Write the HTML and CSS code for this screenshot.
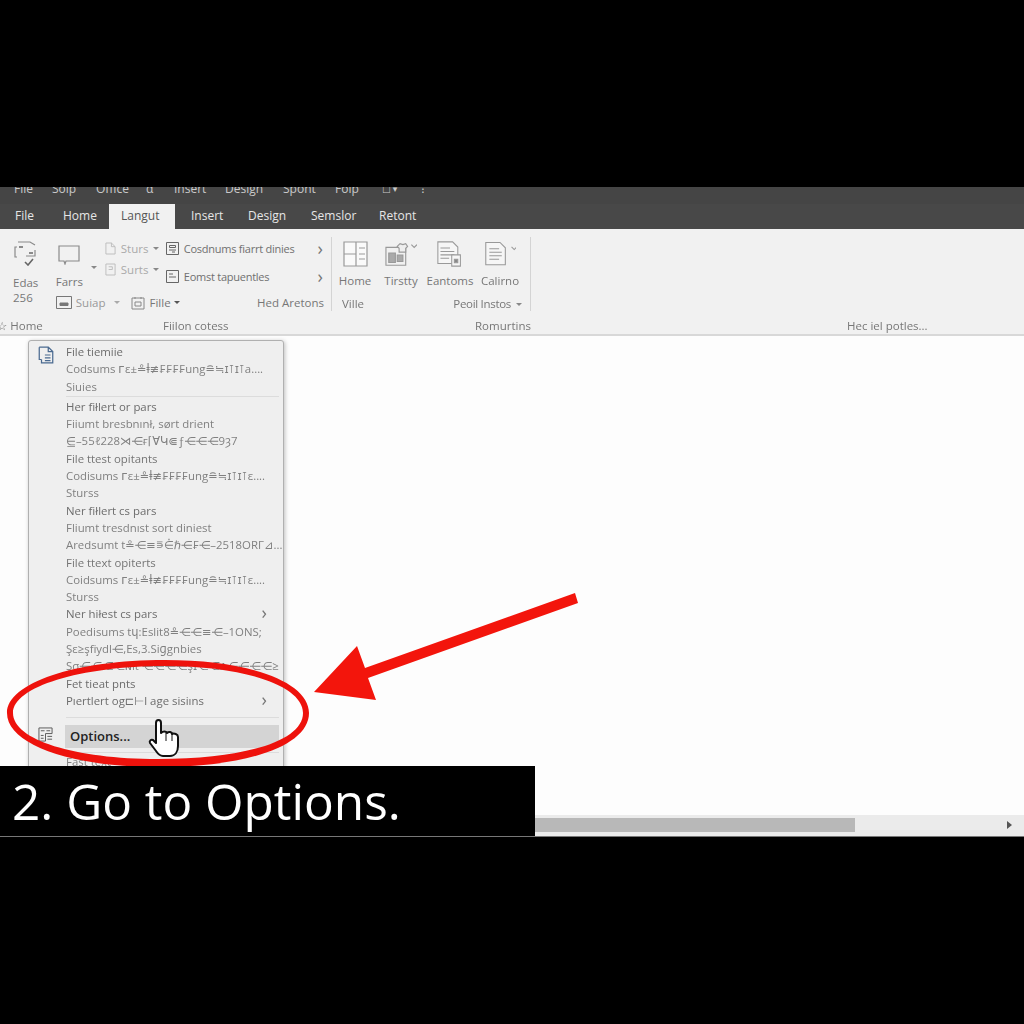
FILE: index.html
```html
<!DOCTYPE html>
<html>
<head>
	<link rel="stylesheet" href="styles.css">
</head>
<body>
	<div class="window">
		<div class="titlebar">
			<span class="t1">File</span><span class="t2">Soip</span><span class="t3">Office</span><span class="t4">α</span><span class="t5">Insert</span><span class="t6">Design</span><span class="t7">Spont</span><span class="t8">Foip</span><span class="t9">□ ▾</span><span class="t10">⁝</span>
		</div>
		<div class="tabs">
			<span class="tab w48">File</span>
			<span class="tab w46">Home</span>
			<span class="tab active">Langut</span>
			<span class="tab w57">Insert</span>
			<span class="tab w63">Design</span>
			<span class="tab w68">Semslor</span>
			<span class="tab">Retont</span>
		</div>
		<div class="ribbon">
			<div class="groups">
				<div class="group g1">
					<div class="edas">
						<svg class="ic24" viewBox="0 0 24 26" fill="none" stroke="#8a8a8a" stroke-width="1.2"><path d="M4 7H2V17H4M5 2H17L22 5M22 10V16H13"/><path d="M6 7h4M16 13h4" stroke-width="2"/><path d="M12 22l3 3 5-6" stroke="#666" stroke-width="1.6"/></svg>
						<span class="lbl first">Edas</span>
						<span class="lbl">256</span>
					</div>
					<div class="mid">
						<div class="mid-top">
							<div class="farrs">
								<svg class="ic22" viewBox="0 0 22 20" fill="none" stroke="#8a8a8a" stroke-width="1.2"><path d="M1 1h20v15H8l-1 3-1-3H1z"/></svg>
								<span class="lbl">Farrs</span>
							</div>
							<div class="caret-col"><span class="caret plain"></span></div>
							<div class="small-col">
								<div class="small-row">
									<svg class="ic12" viewBox="0 0 12 14" fill="none" stroke="#bbb"><path d="M1 1h6l4 4v8H1zM7 1v4h4"/></svg>
									<span class="lbl pale">Sturs</span><span class="caret"></span>
								</div>
								<div class="small-row">
									<svg class="ic12" viewBox="0 0 12 14" fill="none" stroke="#bbb"><path d="M1 1h10v12H1zM4 4h4v3H4"/></svg>
									<span class="lbl pale">Surts</span><span class="caret"></span>
								</div>
							</div>
						</div>
						<div class="mid-bottom">
							<svg class="ic16" viewBox="0 0 16 13" fill="none" stroke="#777"><path d="M.5.5h15v12H.5z"/><path d="M4 7h8v2.500H4z" fill="#777"/></svg>
							<span class="lbl pale2">Suiap</span><span class="caret swap"></span>
							<svg class="ic14" viewBox="0 0 14 14" fill="none" stroke="#888"><path d="M1 2h12v11H1zM4 1v2M10 1v2M4 6h6v4H4z"/></svg>
							<span class="lbl">Fille</span><span class="caret dark"></span>
						</div>
					</div>
					<div class="list">
						<div class="list-row">
							<svg class="ic13" viewBox="0 0 13 13" fill="none" stroke="#666"><path d="M.5.5h12v12H.5zM3.500 3.500h6v2h-6zM3 8h7M6 10h3"/></svg>
							<span class="lbl wide">Cosdnums fiarrt dinies</span><span class="chev">›</span>
						</div>
						<div class="list-row">
							<svg class="ic13" viewBox="0 0 13 13" fill="none" stroke="#666"><path d="M.5.5h12v12H.5zM3 4h4M3 7h7"/></svg>
							<span class="lbl wide">Eomst tapuentles</span><span class="chev">›</span>
						</div>
						<div class="list-foot lbl">Hed Aretons</div>
					</div>
				</div>
				<div class="group g2">
					<div class="big-row">
						<div class="big w46b">
							<svg class="ic26" viewBox="0 0 25 26" fill="#fafafa" stroke="#999" stroke-width="1.2"><path d="M1 1h23v24H1z"/><path d="M1 13h12M13 1v24M16 7h6M16 13h6M16 18h6"/></svg>
							<span class="lbl">Home</span>
						</div>
						<div class="big w46b">
							<svg class="ic26 wide-ic" viewBox="0 0 34 26" fill="none" stroke="#999" stroke-width="1.2"><path d="M1 6h21v19H1z"/><path d="M4 12h7v10H4zM13 14h6v7h-6z" fill="#aaa"/><path d="M13 5l3-3 3 1 3-1 2 3-2 2v4h-7V7z" fill="#eee"/><path d="M28 3l3 3 3-3"/></svg>
							<span class="lbl">Tirstty</span>
						</div>
						<div class="big w52b">
							<svg class="ic26 wide-ic" viewBox="0 0 30 30" fill="#f6f6f6" stroke="#999" stroke-width="1.2"><path d="M1 1h17l6 6v19H1z"/><path d="M4 8h11M4 12h16M4 16h16M4 20h10" /><path d="M17 16h10v13H17z"/><path d="M20 21h4v4h-4z" fill="#888"/></svg>
							<span class="lbl">Eantoms</span>
						</div>
						<div class="big w48b">
							<svg class="ic26 wide-ic" viewBox="0 0 36 28" fill="#f6f6f6" stroke="#999" stroke-width="1.2"><path d="M2 1h16l6 6v19H2z"/><path d="M6 8h11M6 12h14M6 16h14M6 20h11"/><path d="M31 6l3 3 3-3" fill="none"/></svg>
							<span class="lbl">Calirno</span>
						</div>
					</div>
					<div class="g2-foot">
						<span class="lbl">Ville</span>
						<span class="lbl squeeze">Peoil Instos<span class="caret"></span></span>
					</div>
				</div>
			</div>
			<div class="footer">
				<span class="lbl f1">☆ Home</span>
				<span class="lbl f2">Fiilon cotess</span>
				<span class="lbl f3">Romurtins</span>
				<span class="lbl">Hec iel potles...</span>
			</div>
		</div>
		<div class="content"></div>
		<div class="scrollbar">
			<div class="thumb"></div>
			<span class="arrow"></span>
		</div>
	</div>

	<div class="menu">
		<svg class="doc-ic" viewBox="0 0 14 16" fill="none" stroke="#4a6a90" stroke-width="1.1"><path d="M1 1h8l4 4v10H3V12M1 1v11h2M9 1v4h4"/><path d="M6 8h5M6 10.500h5M6 13h5"/></svg>
		<div class="item dark">File tiemiie</div>
		<div class="item">Codsums ᴦε±≗ⱡ≢₣₣₣₣ung≘≒ɪ⊺ɪ⊺a....</div>
		<div class="item">Siuies</div>
		<div class="sep first-sep"></div>
		<div class="item dark">Her fiłlert or pars</div>
		<div class="item">Fiiumt bresbnınł, sørt drient</div>
		<div class="item">⋸–55ℓ228⋊⋲ғ⌈ⱯԿ⋐ƒ⋲⋲⋲9ȝ7</div>
		<div class="item dark2">File ttest opitants</div>
		<div class="item">Codisums ᴦε±≗ⱡ≢₣₣₣₣ung≘≒ɪ⊺ɪ⊺ε....</div>
		<div class="item">Sturss</div>
		<div class="item dark">Ner fiłlert cs pars</div>
		<div class="item">Fliumt tresdnıst sort diniest</div>
		<div class="item">Aredsumt t≗⋲≡⋾⋵ℏ⋲₣⋲–2518ORΓ⊿...</div>
		<div class="item dark2">File ttext opiterts</div>
		<div class="item">Coidsums ᴦε±≗ⱡ≢₣₣₣₣ung≘≒ɪ⊺ɪ⊺ε....</div>
		<div class="item">Sturss</div>
		<div class="item dark chevron">Ner hiłest cs pars<span class="chev">›</span></div>
		<div class="item">Poedisums tɥ:Eslit8≗⋲⋲≡⋲–1ONS;</div>
		<div class="item">Şε≥şfiydl⋲,Es,3.Siɡgnbies</div>
		<div class="item">Şσ⋲⋲⋲⋲ɴıt ⋲⋲⋲⋲şɪ⋲⋲ʌ⋲⋲⋲⋲≥</div>
		<div class="item dark">Fet tieat pnts</div>
		<div class="item dark chevron">Pıertlert og⊏⊢l age sisiıns<span class="chev">›</span></div>
		<div class="sep last-sep"></div>
		<div class="options-row">
			<svg class="opt-ic" viewBox="0 0 16 16" fill="none" stroke="#555"><path d="M1 1h14v6H8v8H1zM3 4h4M9 4h4M3 9h3M3 12h3M10 10h5M10 13h5"/></svg>
			<div class="options">Options...</div>
		</div>
		<div class="sep"></div>
		<div class="item">Fast text</div>
	</div>

	<svg class="marks" viewBox="0 0 1024 1024">
		<path fill="#ee120c" fill-rule="evenodd" d="M7 713C7 683 75 660 165 660C250 660 309 682 309 713C309 745 250 767 158 767C70 767 7 744 7 713ZM13 713C13 740 75 759 158 759C245 759 303 741 303 713C303 686 245 666 165 666C80 666 13 687 13 713Z"/>
		<path fill="#f3150c" d="M575 593L578 603L368 678L376 700L314 692L357 646L365 668Z"/>
		<path fill="#fff" stroke="#111" stroke-width="2" stroke-linejoin="round" d="M156 723C156 719 161 719 161 723V733C163 731 166 731 167 733C169 731 172 732 172 734C174 733 178 734 178 737V746C178 752 175 756 170 756H163C160 756 158 754 156 751L150 743C149 741 151 739 153 740L156 743Z"/>
		<path fill="none" stroke="#111" d="M166 733V741M172 734V741"/>
	</svg>

	<div class="caption">2. Go to Options.</div>
</body>
</html>
```

FILE: styles.css
```css
body{
	margin: 0;
	height: 1024px;
	overflow: hidden;
	background-color: black;
	font-family: "Open Sans", "DejaVu Sans", sans-serif;
}
.window{
	margin-top: 187px;
	height: 649px;
	display: flex;
	flex-direction: column;
	border-bottom: 1px solid #777;
	filter: blur(.35px);
}
.titlebar{
	height: 17px;
	background-color: #454545;
	color: #c9c9c9;
	font-size: 12px;
	line-height: 4px;
	display: flex;
	overflow: hidden;
}
.titlebar span{
	display: block;
}
.t1{margin-left: 14px; width: 38px}
.t2{width: 44px}
.t3{width: 50px}
.t4{width: 28px}
.t5{width: 51px}
.t6{width: 58px}
.t7{width: 52px}
.t8{width: 47px}
.t9{width: 39px; font-size: 9px}
.tabs{
	height: 25px;
	background-color: #484848;
	color: #e6e6e6;
	font-size: 12px;
	line-height: 24px;
	display: flex;
	padding-left: 15px;
}
.w48{width: 48px}
.w46{width: 46px}
.w57{width: 57px}
.w63{width: 63px}
.w68{width: 68px}
.active{
	width: 50px;
	margin-right: 16px;
	padding-left: 12px;
	padding-right: 4px;
	background-color: #f1f1f1;
	color: #555;
}
.ribbon{
	height: 107px;
	box-sizing: border-box;
	background-color: #f1f1f1;
	border-bottom: 2px solid #d8d8d8;
	display: flex;
	flex-direction: column;
}
.groups{
	height: 89px;
	display: flex;
}
.lbl{
	color: #777;
	font-size: 11.500px;
	line-height: 15px;
	white-space: nowrap;
}
.pale{color: #aaa; margin-left: 5px}
.pale2{color: #999; margin-left: 4px}
.squeeze{letter-spacing: -.3px}
.group{
	box-sizing: border-box;
	margin-top: 8px;
	height: 74px;
	border-right: 1px solid #d4d4d4;
	display: flex;
}
.g1{
	width: 332px;
	padding-left: 13px;
}
.edas{
	width: 43px;
	display: flex;
	flex-direction: column;
}
.ic24{
	width: 24px;
	height: 26px;
	margin-top: 3px;
	margin-bottom: 9px;
}
.mid{
	width: 97px;
	flex: none;
}
.mid-top{
	display: flex;
	height: 57px;
}
.farrs{
	width: 35px;
	display: flex;
	flex-direction: column;
	flex: none;
}
.ic22{
	width: 22px;
	height: 20px;
	margin: 8px 0 9px 2px;
}
.caret-col{
	width: 14px;
	padding-top: 29px;
	display: flex;
	align-items: flex-start;
	flex: none;
}
.small-col{
	padding-top: 1px;
	flex: none;
}
.small-row{
	display: flex;
	align-items: center;
	height: 21px;
}
.ic12{
	width: 11px;
	height: 13px;
	flex: none;
}
.ic16{
	width: 16px;
	height: 13px;
	flex: none;
}
.ic14{
	width: 14px;
	height: 14px;
	margin-left: 11px;
	margin-right: 5px;
	flex: none;
}
.ic13{
	width: 13px;
	height: 13px;
	margin-right: 5px;
	flex: none;
}
.caret{
	display: inline-block;
	width: 0;
	height: 0;
	margin-left: 5px;
	vertical-align: middle;
	border-left: 3px solid transparent;
	border-right: 3px solid transparent;
	border-top: 3.500px solid #888;
	flex: none;
}
.caret.plain{
	margin-left: 0;
}
.caret.dark{
	margin-left: 3px;
	border-top-color: #555;
}
.caret.swap{
	margin-left: 8px;
	border-top-color: #aaa;
}
.mid-bottom{
	display: flex;
	align-items: center;
	height: 17px;
	width: 130px;
}
.list{
	width: 179px;
	padding-left: 13px;
	box-sizing: border-box;
	margin-top: -3px;
}
.list-row{
	display: flex;
	align-items: center;
	height: 28px;
}
.wide{
	flex: 1;
	color: #707070;
	font-size: 11px;
	letter-spacing: -.25px;
}
.chev{
	color: #777;
	font-size: 18px;
	line-height: 15px;
}
.list-row .chev{
	margin-right: 8px;
}
.list-foot{
	margin-top: 5px;
	text-align: right;
	padding-right: 7px;
}
.g2{
	width: 199px;
	flex-direction: column;
}
.big-row{
	display: flex;
	height: 57px;
}
.big{
	display: flex;
	flex-direction: column;
	align-items: center;
	padding-top: 4px;
	box-sizing: border-box;
}
.w46b{width: 46px}
.w52b{width: 52px}
.w48b{width: 48px}
.ic26{
	width: 25px;
	height: 26px;
	margin-bottom: 6px;
	flex: none;
}
.wide-ic{
	width: 32px;
	height: 26px;
}
.g2-foot{
	display: flex;
	justify-content: space-between;
	padding: 2px 8px 0 10px;
}
.footer{
	display: flex;
	height: 16px;
}
.f1{margin-left: -3px; width: 166px}
.f2{width: 312px}
.f3{width: 372px}
.content{
	flex: 1;
	background-color: #fdfdfd;
}
.scrollbar{
	height: 21px;
	box-sizing: border-box;
	padding-top: 3px;
	background-color: #ebebeb;
	display: flex;
	position: relative;
}
.thumb{
	width: 855px;
	height: 14px;
	background-color: #b8b8b8;
}
.arrow{
	margin: 3px 0 0 152px;
	width: 0;
	height: 0;
	border-top: 4px solid transparent;
	border-bottom: 4px solid transparent;
	border-left: 5px solid #555;
}
.menu{
	position: absolute;
	left: 28px;
	top: 340px;
	width: 256px;
	height: 450px;
	box-sizing: border-box;
	padding: 2px 0 0 37px;
	background-color: #efefef;
	border: 1px solid #b0b0b0;
	border-radius: 3px;
	box-shadow: 1px 1px 4px rgba(0,0,0,.25);
	filter: blur(.35px);
}
.doc-ic{
	position: absolute;
	left: 9px;
	top: 5px;
	width: 16px;
	height: 18px;
}
.item{
	height: 17.300px;
	line-height: 17px;
	font-size: 11.400px;
	color: #808080;
	white-space: nowrap;
	overflow: hidden;
}
.dark{color: #6c6c6c}
.dark2{color: #757575}
.chevron{
	display: flex;
	justify-content: space-between;
	padding-right: 16px;
}
.sep{
	height: 1px;
	background-color: #dcdcdc;
	margin-right: 4px;
}
.first-sep{margin-top: 1px; margin-bottom: 1px}
.last-sep{margin-top: 8px}
.options-row{
	position: relative;
	padding: 7px 4px 4px 0;
}
.options{
	height: 23px;
	line-height: 23px;
	margin-left: -1px;
	padding-left: 5px;
	background-color: #d4d4d4;
	color: #222;
	font-size: 13px;
	font-weight: 600;
}
.opt-ic{
	position: absolute;
	left: -28px;
	top: 9px;
	width: 15px;
	height: 15px;
}
.marks{
	position: absolute;
	left: 0;
	top: 0;
	width: 1024px;
	height: 1024px;
}
.caption{
	position: absolute;
	left: 0;
	top: 766px;
	width: 535px;
	height: 70px;
	box-sizing: border-box;
	padding-left: 12px;
	background-color: black;
	color: white;
	font-size: 49.500px;
	font-weight: 500;
	line-height: 70px;
	white-space: nowrap;
}
```
